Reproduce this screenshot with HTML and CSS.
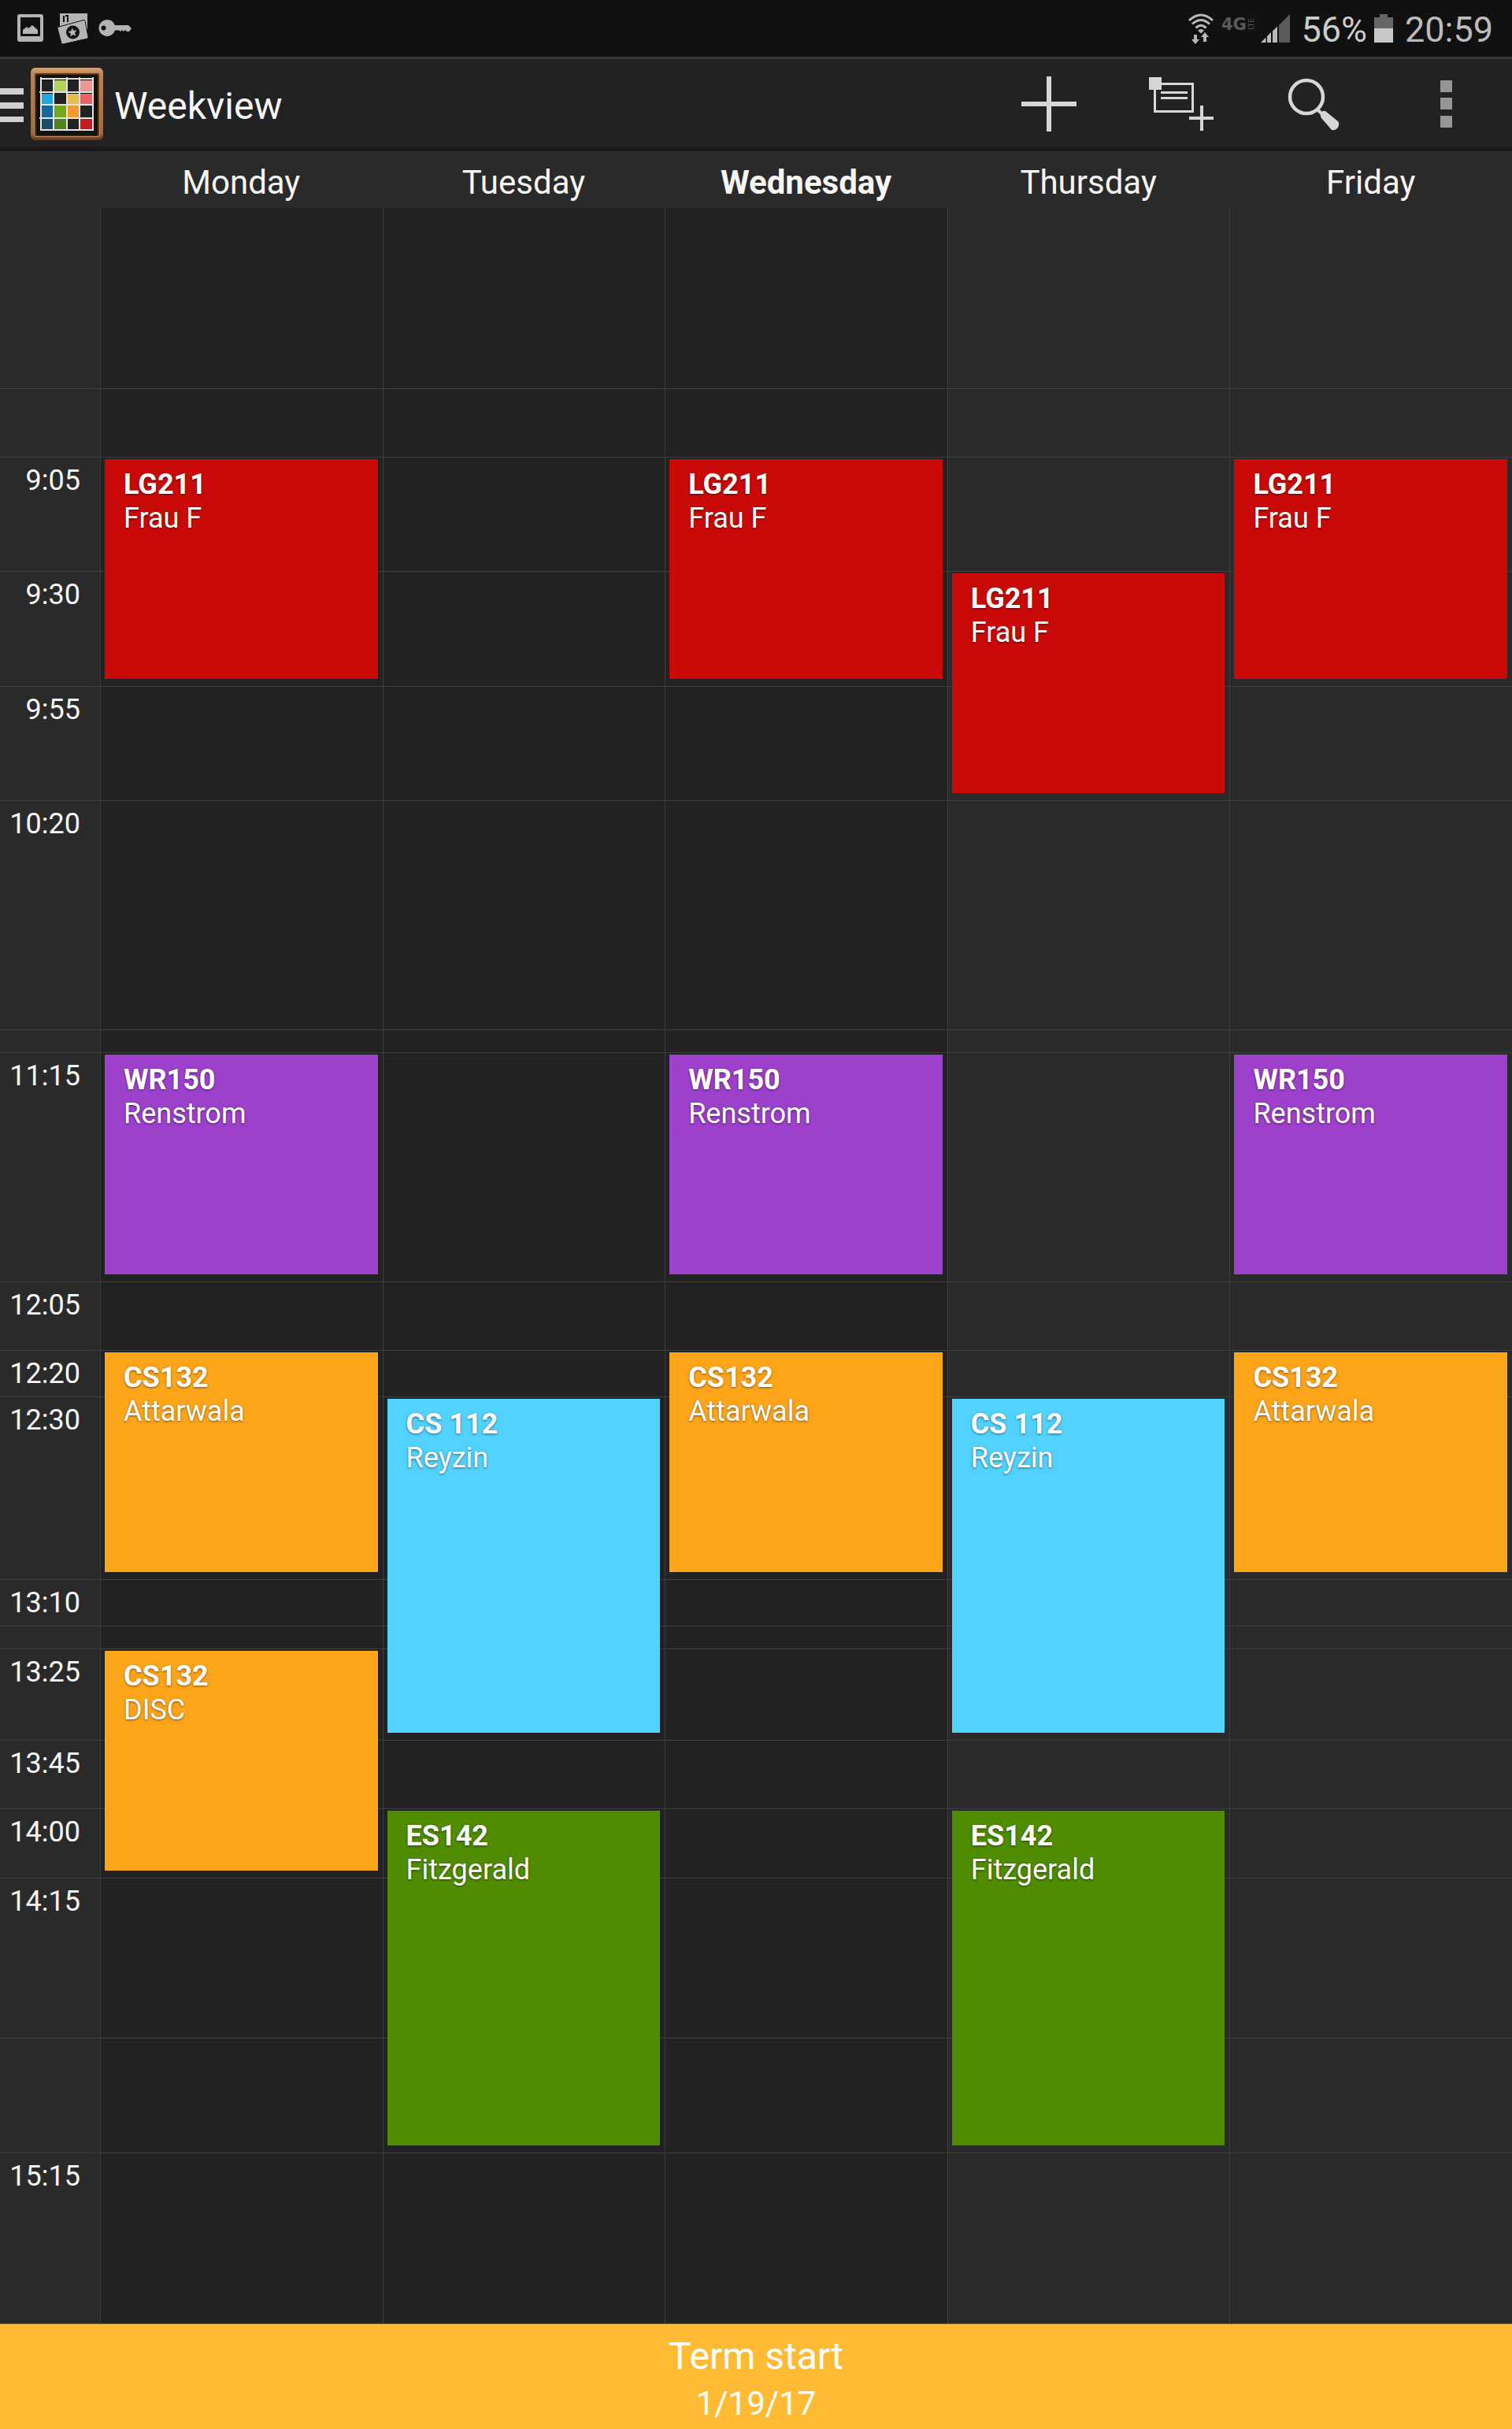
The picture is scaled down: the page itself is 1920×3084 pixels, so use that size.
FILE: index.html
```html
<!DOCTYPE html>
<html lang="en">
<head>
<meta charset="utf-8">
<meta name="viewport" content="width=device-width, initial-scale=1">
<title>Weekview</title>
<link rel="stylesheet" href="styles.css">
</head>
<body>
<div class="status-bar">
  <div class="status-notices">
    <svg class="notice-image" width="34" height="36" viewBox="0 0 34 36" aria-hidden="true">
      <path fill="#b4b4b4" fill-rule="evenodd" d="M3 0h27a3 3 0 0 1 3 3v29a3 3 0 0 1-3 3H3a3 3 0 0 1-3-3V3a3 3 0 0 1 3-3zM4 4v24h25V4z"/>
      <path fill="#b4b4b4" d="M7 25v-5l5-4 2 2 5-4 7 6v5z"/>
    </svg>
    <svg class="notice-photos" width="40" height="42" viewBox="0 0 40 42" aria-hidden="true">
      <path fill="#b4b4b4" d="M3 2h35v20L3 18z"/>
      <path fill="none" stroke="#111" stroke-width="2" d="M8 5v8M10 5h3v8"/>
      <path fill="#b4b4b4" stroke="#111" stroke-width="1" d="M0 19.500 33 10.500a1.500 1.500 0 0 1 2 1L39 32a1.500 1.500 0 0 1-1 2L7 41a1.500 1.500 0 0 1-2-1L0 21z"/>
      <circle cx="19.500" cy="26" r="8.500" fill="#111"/>
      <path fill="#b4b4b4" d="m18.500 20.500 2 3.500 4-.5-2.500 3.200 1.500 3.800-3.800-1.500-3.200 2.500.3-4-3.500-2.200 4-1z"/>
    </svg>
    <svg class="notice-key" width="43" height="24" viewBox="0 0 43 24" aria-hidden="true">
      <path fill="#b4b4b4" fill-rule="evenodd" d="M11 1a10.500 10.500 0 0 1 9.800 7H38l4 4-3 4h-3l-2-2-2 2-2-2-2 2-2-1.500h-5A10.500 10.500 0 1 1 11 1zM6.500 8.500a3 3 0 1 0 0 6 3 3 0 0 0 0-6z"/>
    </svg>
  </div>
  <div class="status-system">
    <svg width="34" height="40" viewBox="0 0 34 40" role="img" aria-label="Wi-Fi">
      <g fill="none" stroke="#b8b8b8" stroke-width="3">
        <path d="M2 10Q17-4 32 10"/>
        <path d="M6 14.500Q17 4.500 28 14.500"/>
        <path d="M10.500 19.500Q17 13 23.500 19.500"/>
      </g>
      <path fill="#b8b8b8" d="M13 22.500q4-3 8 0l-4 4zM8 28h4v6h3l-5 6-5-6h3zM20 37h4v-6h3l-5-6-5 6h3z"/>
    </svg>
    <svg class="network" width="42" height="40" viewBox="0 0 42 40" role="img" aria-label="4G LTE">
      <text class="network-main" x="0" y="22">4G</text>
      <text class="network-sub" transform="translate(41 22) rotate(-90)">LTE</text>
    </svg>
    <svg class="signal" width="38" height="40" viewBox="0 0 38 40" role="img" aria-label="Signal strength">
      <path fill="#5a5a5a" d="M23 16 37 2v36H23z"/>
      <path fill="#b8b8b8" d="M0 38l6.500-6.500V38zM8 30l5-5v13H8zM15 23.500l6-6V38h-6z"/>
    </svg>
    <span class="status-text battery-level">56%</span>
    <svg class="battery" width="26" height="40" viewBox="0 0 26 40" role="img" aria-label="Battery">
      <path fill="#666" d="M8 2h10v4h7v14H1V6h7z"/>
      <path fill="#c8c8c8" d="M1 20h24v18H1z"/>
    </svg>
    <time class="status-text clock">20:59</time>
  </div>
</div>

<header class="app-bar">
  <button class="home" type="button" aria-label="Open navigation">
    <svg width="30" height="46" viewBox="0 0 30 46" aria-hidden="true">
      <path fill="#d0d0d0" d="M0 3h30v8H0zM0 21h30v8H0zM0 39h30v7H0z"/>
    </svg>
    <svg class="logo" width="92" height="92" viewBox="0 0 92 92" aria-hidden="true">
      <defs>
        <linearGradient id="frame" x1="0" y1="0" x2="0" y2="1">
          <stop offset="0" stop-color="#d8a67a"/>
          <stop offset=".08" stop-color="#b9835a"/>
          <stop offset=".9" stop-color="#9c6840"/>
          <stop offset="1" stop-color="#643516"/>
        </linearGradient>
      </defs>
      <rect width="92" height="92" rx="6" fill="url(#frame)"/>
      <rect x="4" y="6" width="84" height="82" rx="3" fill="#c08a5c"/>
      <rect x="5" y="7" width="82" height="80" rx="2" fill="#5e3417"/>
      <rect x="7" y="9" width="78" height="77" rx="1" fill="#121212"/>
      <path fill="#222" d="M14 16h14v15H14zM47 16h14v15H47zM30 33h15v13H30zM63 48h15v15H63zM47 65h14v13H47z"/>
      <path fill="#b4d25c" d="M30 16h15v15H30z"/><path fill="#e59a98" d="M63 16h15v15H63z"/>
      <path fill="#1ea9dc" d="M14 33h14v13H14z"/><path fill="#e8bb50" d="M47 33h14v13H47z"/><path fill="#e96468" d="M63 33h15v13H63z"/>
      <path fill="#18699a" d="M14 48h14v15H14z"/><path fill="#74a81a" d="M30 48h15v15H30z"/><path fill="#f09c2c" d="M47 48h14v15H47z"/>
      <path fill="#174e69" d="M14 65h14v13H14z"/><path fill="#4f8518" d="M30 65h15v13H30z"/><path fill="#c01c22" d="M63 65h15v13H63z"/>
      <path fill="none" stroke="#e4e4e4" stroke-width="2" d="M13 12v68M29 13v66M46 12v67M62 12v68M79 12v68M12 14h68M11 31h68M12 47h67M11 64h68M12 79h68"/>
    </svg>
  </button>
  <h1 class="title">Weekview</h1>
  <div class="actions">
    <button class="action" type="button" aria-label="Add lesson">
      <svg width="84" height="72" viewBox="0 0 84 72" aria-hidden="true">
        <path fill="#d6d6d6" d="M39 1h6v32h32v6H45v32h-6V39H7v-6h32z"/>
      </svg>
    </button>
    <button class="action" type="button" aria-label="Add task">
      <svg width="84" height="72" viewBox="0 0 84 72" aria-hidden="true">
        <path fill="#d6d6d6" d="M1 2h16v16H1z"/>
        <path fill="none" stroke="#d6d6d6" stroke-width="3" d="M17 10.500h39.500v35h-48V18M16 21.500h34M16 28.500h34"/>
        <path fill="#d6d6d6" d="M66 38h4v14h13v4H70v14h-4V56H52v-4h14z"/>
      </svg>
    </button>
    <button class="action" type="button" aria-label="Search">
      <svg width="84" height="72" viewBox="0 0 84 72" aria-hidden="true">
        <circle cx="33" cy="27" r="21" fill="none" stroke="#d6d6d6" stroke-width="4.500"/>
        <path stroke="#d6d6d6" stroke-width="4" d="m46 42 6 6"/>
        <path fill="#d6d6d6" d="M51 48q2-4 6-3l16 13q3 4-1 9-3 3-7 2L52 54q-2-3-1-6z"/>
      </svg>
    </button>
    <button class="action" type="button" aria-label="More options">
      <svg width="84" height="72" viewBox="0 0 84 72" aria-hidden="true">
        <path fill="#969696" d="M35 6h15v15H35zM35 28h15v15H35zM35 51h15v15H35z"/>
      </svg>
    </button>
  </div>
</header>

<div class="day-names">
  <span class="day-name mon">Monday</span>
  <span class="day-name tue">Tuesday</span>
  <strong class="day-name wed">Wednesday</strong>
  <span class="day-name thu">Thursday</span>
  <span class="day-name fri">Friday</span>
</div>

<main class="week">
  <div class="day past mon"></div>
  <div class="day past tue"></div>
  <div class="day past wed"></div>
  <div class="day thu"></div>
  <div class="day fri"></div>

  <div class="slot" style="grid-row: t0850"></div>
  <div class="slot" style="grid-row: t0905"><time>9:05</time></div>
  <div class="slot" style="grid-row: t0930"><time>9:30</time></div>
  <div class="slot" style="grid-row: t0955"><time>9:55</time></div>
  <div class="slot" style="grid-row: t1020"><time>10:20</time></div>
  <div class="slot" style="grid-row: t1110"></div>
  <div class="slot" style="grid-row: t1115"><time>11:15</time></div>
  <div class="slot" style="grid-row: t1205"><time>12:05</time></div>
  <div class="slot" style="grid-row: t1220"><time>12:20</time></div>
  <div class="slot" style="grid-row: t1230"><time>12:30</time></div>
  <div class="slot" style="grid-row: t1310"><time>13:10</time></div>
  <div class="slot" style="grid-row: t1320"></div>
  <div class="slot" style="grid-row: t1325"><time>13:25</time></div>
  <div class="slot" style="grid-row: t1345"><time>13:45</time></div>
  <div class="slot" style="grid-row: t1400"><time>14:00</time></div>
  <div class="slot" style="grid-row: t1415"><time>14:15</time></div>
  <div class="slot" style="grid-row: t1450"></div>
  <div class="slot" style="grid-row: t1515"><time>15:15</time></div>

  <article class="lesson german mon" style="grid-row: t0905 / t0955"><h2>LG211</h2><p>Frau F</p></article>
  <article class="lesson writing mon" style="grid-row: t1115 / t1205"><h2>WR150</h2><p>Renstrom</p></article>
  <article class="lesson maths mon" style="grid-row: t1220 / t1310"><h2>CS132</h2><p>Attarwala</p></article>
  <article class="lesson maths mon" style="grid-row: t1325 / t1415"><h2>CS132</h2><p>DISC</p></article>

  <article class="lesson computing tue" style="grid-row: t1230 / t1345"><h2>CS 112</h2><p>Reyzin</p></article>
  <article class="lesson earth tue" style="grid-row: t1400 / t1515"><h2>ES142</h2><p>Fitzgerald</p></article>

  <article class="lesson german wed" style="grid-row: t0905 / t0955"><h2>LG211</h2><p>Frau F</p></article>
  <article class="lesson writing wed" style="grid-row: t1115 / t1205"><h2>WR150</h2><p>Renstrom</p></article>
  <article class="lesson maths wed" style="grid-row: t1220 / t1310"><h2>CS132</h2><p>Attarwala</p></article>

  <article class="lesson german thu" style="grid-row: t0930 / t1020"><h2>LG211</h2><p>Frau F</p></article>
  <article class="lesson computing thu" style="grid-row: t1230 / t1345"><h2>CS 112</h2><p>Reyzin</p></article>
  <article class="lesson earth thu" style="grid-row: t1400 / t1515"><h2>ES142</h2><p>Fitzgerald</p></article>

  <article class="lesson german fri" style="grid-row: t0905 / t0955"><h2>LG211</h2><p>Frau F</p></article>
  <article class="lesson writing fri" style="grid-row: t1115 / t1205"><h2>WR150</h2><p>Renstrom</p></article>
  <article class="lesson maths fri" style="grid-row: t1220 / t1310"><h2>CS132</h2><p>Attarwala</p></article>
</main>

<footer class="term">
  <p class="term-title">Term start</p>
  <p class="term-date">1/19/17</p>
</footer>
</body>
</html>
```
FILE: styles.css
```css
:root {
  --panel: #2a2a2a;
  --panel-dark: #222;
  --line: #3d3d3d;
  --columns: 127px repeat(5, minmax(0, 1fr));
}

* {
  box-sizing: border-box;
}

body {
  margin: 0;
  min-height: 100vh;
  display: flex;
  flex-direction: column;
  background: var(--panel);
  color: #f6f6f6;
  font-family: Roboto, "Liberation Sans", sans-serif;
}

h1,
h2,
p {
  margin: 0;
  font-weight: 400;
}

svg {
  display: block;
  flex: none;
}

button {
  margin: 0;
  padding: 0;
  border: 0;
  background: none;
  color: inherit;
  font: inherit;
  cursor: pointer;
}

/* Status bar */
.status-bar {
  display: flex;
  justify-content: space-between;
  height: 75px;
  padding: 0 24px 0 22px;
  border-bottom: 3px solid #383838;
  background: #111;
}

.status-notices,
.status-system {
  display: flex;
  align-items: center;
}

.notice-photos {
  margin-left: 17px;
}

.notice-key {
  margin-left: 12px;
}

.network {
  margin-left: 9px;
  fill: #5a5a5a;
}

.network-main {
  font: 700 21px "DejaVu Sans", sans-serif;
}

.network-sub {
  font: 9px "DejaVu Sans", sans-serif;
}

.signal {
  margin-left: 8px;
}

.status-text {
  padding-top: 4px;
  color: #bcbcbc;
  font-size: 45px;
  line-height: 60px;
}

.battery-level {
  margin-left: 13px;
  color: #ccc;
}

.battery {
  margin: 0 14px 0 8px;
}

/* App bar */
.app-bar {
  display: flex;
  align-items: center;
  height: 117px;
  padding-bottom: 3px;
  background: var(--panel-dark);
  box-shadow: inset 0 -6px #1b1b1b;
}

.home {
  display: flex;
  align-items: center;
  gap: 9px;
}

.title {
  margin-left: 14px;
  padding-top: 6px;
  font-size: 48px;
  line-height: 60px;
}

.actions {
  display: flex;
  margin-left: auto;
}

.action {
  display: flex;
  justify-content: center;
  width: 168px;
}

/* Week grid */
.day-names {
  display: grid;
  grid-template-columns: var(--columns);
  padding: 15px 0 7px;
  font-size: 42px;
  line-height: 50px;
  text-align: center;
}

.mon { grid-column: 2; }
.tue { grid-column: 3; }
.wed { grid-column: 4; }
.thu { grid-column: 5; }
.fri { grid-column: 6; }

.week {
  flex: 1;
  display: grid;
  grid-template-columns: var(--columns);
  grid-template-rows:
    229px
    [t0850] 87px
    [t0905] 145px
    [t0930] 146px
    [t0955] 145px
    [t1020] 291px
    [t1110] 29px
    [t1115] 291px
    [t1205] 87px
    [t1220] 59px
    [t1230] 232px
    [t1310] 59px
    [t1320] 29px
    [t1325] 116px
    [t1345] 87px
    [t1400] 88px
    [t1415] 203px
    [t1450] 146px
    [t1515] minmax(180px, 1fr);
}

.day {
  grid-row: 1 / -1;
  border-left: 1px solid var(--line);
}

.past {
  background: var(--panel-dark);
}

.slot {
  grid-column: 1 / -1;
  display: grid;
  grid-template-columns: var(--columns);
  align-items: start;
  border-top: 1px solid var(--line);
}

.slot time {
  padding: 8px 25px 0 0;
  font-size: 36px;
  line-height: 43px;
  text-align: right;
}

.lesson {
  margin: 3px 6px 9px;
  padding: 11px 24px;
  overflow: hidden;
  color: #fff;
  font-size: 36px;
  line-height: 43px;
  text-shadow: 0 1px 3px rgba(0, 0, 0, .5);
}

.lesson h2 {
  font-size: inherit;
  font-weight: 700;
}

.german { background: #c90a08; }
.writing { background: #9d40cc; }
.maths { background: #ffa51a; }
.computing { background: #52d2ff; }
.earth { background: #4f8c00; }

/* Term banner */
.term {
  padding: 11px 0 2px;
  border-top: 1px solid #8c6a2c;
  background: #ffbb33;
  color: #fff;
  line-height: 60px;
  text-align: center;
}

.term-title {
  font-size: 48px;
}

.term-date {
  font-size: 42px;
}
```
